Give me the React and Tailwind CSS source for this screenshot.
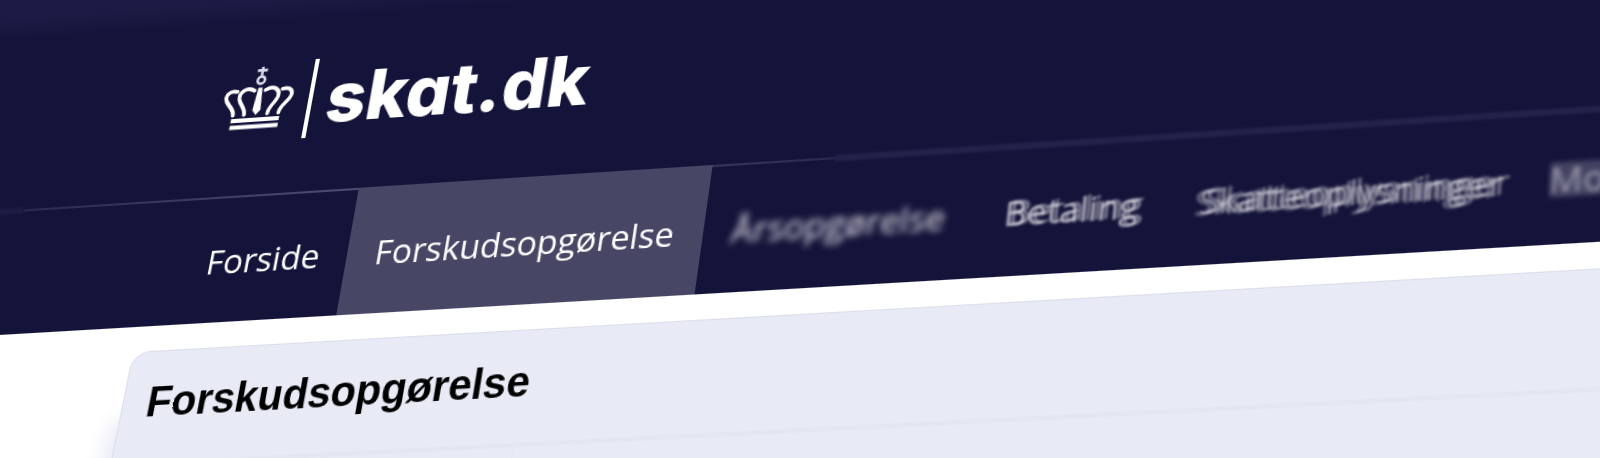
import { clsx } from "clsx";

const menu = [
  { label: "Forside", look: "px-[26px] text-white" },
  { label: "Forskudsopgørelse", look: "bg-[#484665] px-[26px] text-white", current: true },
  { label: "Årsopgørelse", look: "px-[26px] font-medium text-white/90 blur-[3px]" },
  {
    label: "Betaling",
    look: "px-[26px] font-medium text-white/70 blur-[1px] [text-shadow:4px_-1px_1px_#ffffff80]",
  },
  {
    label: "Skatteoplysninger",
    look: "px-[26px] font-medium text-white/50 blur-[1px] [text-shadow:5px_-1px_2px_#ffffff80,-4px_1px_2px_#ffffff70]",
  },
  { label: "Mo", look: "pl-3 font-medium text-white/50 blur-[2px]", smeared: true },
];

const Crown = () => (
  <svg viewBox="7 14 70 63" className="mb-2 w-[68px] shrink-0" fill="none" stroke="white">
    <g stroke="#dcdcea" strokeWidth="2.6">
      <path d="M40.5 15v9M35.5 18.5h10" />
      <circle cx="40.8" cy="28.3" r="3.6" />
    </g>
    <g strokeWidth="3.8" strokeLinecap="round">
      <path d="M19 38.5C11 36.5 7 42 10.5 48c3 5 8.5 8 8.5 14" />
      <path d="M36 38.5C28 33.5 21 39 22.5 46c1.5 6 7.5 9 7.5 16" />
      <path d="M47 38.5C55 33.5 62 39 60.5 46c-1.5 6-7.5 9-7.5 16" />
      <path d="M64 38.5c8-2 12 3.5 8.5 9.5-3 5-8.5 8-8.5 14" />
    </g>
    <path d="M39.5 36h4l2 22-4 5-4-5z" fill="white" stroke="none" />
    <path d="M18 67.5h47.5M18 74.3h47.5" strokeWidth="4" />
  </svg>
);

const Logo = () => (
  <a href="/" className="flex items-center" aria-label="skat.dk">
    <Crown />
    <span className="mx-[14px] h-[76px] w-1 bg-white" />
    <span className="font-['Inter'] text-[66px] leading-none font-extrabold text-white [font-feature-settings:'cv11']">
      skat.dk
    </span>
  </a>
);

export default function App() {
  return (
    <div className="h-screen overflow-hidden bg-white font-['Open_Sans',sans-serif]">
      {/* the whole page lies on a plane that leans away to the left */}
      <div className="min-h-[150vh] w-[110%] origin-top-left [transform:matrix3d(1,-0.075,0,-0.00005,-0.222,1,0,-0.000111,0,0,1,0,0,0,0,1)]">
        <header className="bg-[#14133a]">
          <div className="h-[207px] bg-linear-to-b from-[#1d1b45] from-10% to-[#14133a] to-20% pt-[82px] pl-[244px]">
            <Logo />
          </div>
          {/* sharp in the middle, out of focus towards both ends */}
          <div className="flex h-1.5 items-center">
            <span className="h-1.5 w-[4%] bg-[#1d1c44] blur-[1px]" />
            <span className="h-0.5 w-[43%] bg-linear-to-r from-[#2a2950] via-[#55537a] to-[#2a2950]" />
            <span className="h-1.5 flex-1 bg-[#24224b] blur-[1px]" />
          </div>
          <nav className="relative -mt-1 flex h-[118px] pl-[232px]">
            {menu.map((item) => (
              <a
                key={item.label}
                href="#"
                aria-current={item.current ? "page" : undefined}
                className={clsx("flex shrink-0 items-center pt-1 text-[31px]", item.look)}
              >
                <span className={clsx(item.smeared && "bg-white/20 leading-none")}>{item.label}</span>
              </a>
            ))}
          </nav>
        </header>
        <main className="pt-[23px] pl-[204px]">
          <section className="min-h-screen rounded-tl-2xl border border-[#dcdee9] bg-[#e8eaf6] shadow-[-8px_60px_20px_#e8eaf6]">
            <h1 className="h-[104px] border-b-4 border-[#e4e6f2] px-[22px] pt-[18px] font-['Liberation_Sans',sans-serif] text-[38px] leading-[56px] font-bold text-black">
              Forskudsopgørelse
            </h1>
            <div className="ml-[368px] h-40 border-l border-[#e4e6f2]" />
          </section>
        </main>
      </div>
    </div>
  );
}
